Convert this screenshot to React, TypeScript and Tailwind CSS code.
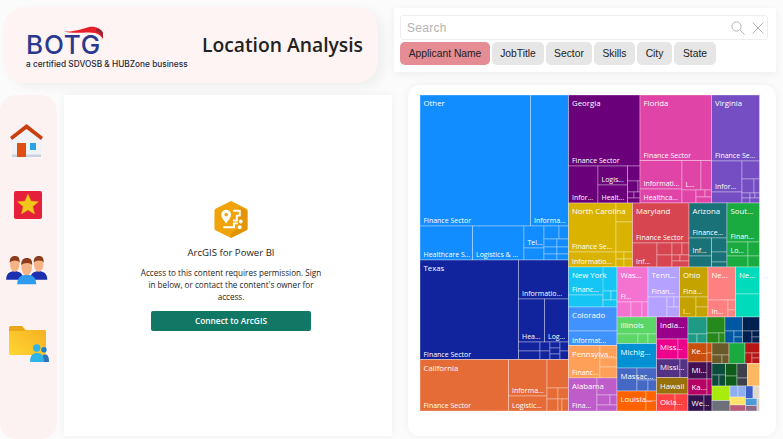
import React from "react";

type Cell = [number, number, number, number, string?];
type Group = { fill: string; name?: string; nx?: number; cells: Cell[] };

const groups: Group[] = [
  { fill: "#118DFF", name: "Other", cells: [[420,95,530.5,226,"Finance Sector"],[530.5,95,568.5,226,"Informa..."],[420,226,472.5,260,"Healthcare S..."],[472.5,226,524,260,"Logistics & ..."],[524,226,544,248,"Tel..."],[524,248,544,260],[544,226,559,239],[559,226,568.5,239],[544,239,557,247],[557,239,568.5,247],[544,247,557,254],[544,254,557,260],[557,247,568.5,254],[557,254,568.5,260]] },
  { fill: "#12239E", name: "Texas", cells: [[420,260,518.5,359.5,"Finance Sector"],[518.5,260,568.5,299,"Informatio..."],[518.5,299,544.5,342,"Hea..."],[544.5,299,568.5,342,"Log..."],[518.5,342,540,351],[518.5,351,540,359.5],[540,342,550,351],[540,351,550,359.5],[550,342,560,348],[550,348,560,354],[550,354,560,359.5],[560,342,568.5,351],[560,351,568.5,359.5]] },
  { fill: "#E66C37", name: "California", cells: [[420,359.5,508.5,411,"Finance Sector"],[508.5,359.5,547,396,"Informa..."],[508.5,396,547,411,"Logistic..."],[547,359.5,568.5,388],[547,388,558,399],[558,388,568.5,399],[547,399,558,411],[558,399,562,411],[562,399,568.5,411]] },
  { fill: "#6B007B", name: "Georgia", cells: [[568.5,95,640,166,"Finance Sector"],[568.5,166,598,203,"Infor..."],[598,166,627.5,185,"Logis..."],[598,185,627.5,203,"Healt..."],[627.5,166,640,181],[627.5,181,638,192],[638,181,640,192],[627.5,192,634,198],[634,192,640,198],[627.5,198,640,203]] },
  { fill: "#E044A7", name: "Florida", cells: [[640,95,711.5,160.5,"Finance Sector"],[640,160.5,682,189,"Informati..."],[640,189,682,203,"Healthca..."],[682,160.5,701,190,"L..."],[701,160.5,711.5,190],[682,190,696,203],[696,190,705,197],[705,190,711.5,197],[696,197,711.5,203]] },
  { fill: "#744EC2", name: "Virginia", cells: [[711.5,95,759.5,161,"Finance Se..."],[711.5,161,742,192,"Infor..."],[711.5,192,742,203],[742,161,759.5,179],[742,179,754,193],[754,179,759.5,193],[742,193,750,198],[750,193,755,198],[755,193,759.5,198],[742,198,750,203],[750,198,759.5,203]] },
  { fill: "#D9B300", name: "North Carolina", cells: [[568.5,203,616,252,"Finance Se..."],[568.5,252,616,267,"Informatio..."],[616,203,632.5,222],[616,222,632.5,252],[616,252,624,259],[624,252,632.5,259],[616,259,624,267],[624,259,632.5,267]] },
  { fill: "#D64550", name: "Maryland", cells: [[632.5,203,689,243,"Finance Sector"],[632.5,243,657,267,"Inf..."],[657,243,672,255],[672,243,682,255],[682,243,689,255],[657,255,672,267],[672,255,680,261],[680,255,689,261],[672,261,689,267]] },
  { fill: "#197278", name: "Arizona", cells: [[689,203,727,238,"Finance..."],[689,238,711.5,256,"Inf..."],[711.5,238,727,252],[711.5,252,727,262],[689,256,711.5,267],[711.5,262,727,267]] },
  { fill: "#1AAB40", name: "Sout...", cells: [[727,203,759.5,242,"Finan..."],[727,242,748,256,"Lo..."],[748,242,759.5,256],[727,256,748,267],[748,256,759.5,267]] },
  { fill: "#15C6F4", name: "New York", cells: [[568.5,267,617,295,"Financ..."],[568.5,295,603,307],[603,267,617,291],[603,291,611,300],[611,291,617,300],[603,300,617,307]] },
  { fill: "#4092FF", name: "Colorado", cells: [[568.5,307,617,331],[568.5,331,617,345.5,"Informat..."]] },
  { fill: "#FFA058", name: "Pennsylva...", cells: [[568.5,345.5,600,378,"Financ..."],[600,345.5,617,358],[600,358,617,367],[600,367,617,378]] },
  { fill: "#BE5DC9", name: "Alabama", cells: [[568.5,378,597,411,"Fina..."],[597,378,617,395],[597,395,610,405],[610,395,617,405],[597,405,617,411]] },
  { fill: "#F472D0", name: "Was...", cells: [[617,267,648,302,"Fl..."],[617,302,631,317],[631,302,642,317],[642,302,648,317]] },
  { fill: "#B5A1FF", name: "Tenn...", cells: [[648,267,679.5,297,"Finan..."],[648,297,667,317],[667,297,674,307],[674,297,679.5,307],[667,307,679.5,317]] },
  { fill: "#C4A200", name: "Ohio", cells: [[679.5,267,708,297,"Fina..."],[679.5,297,696,317,"I..."],[696,297,708,307],[696,307,708,317]] },
  { fill: "#FF8080", name: "Ne...", cells: [[708,267,735.5,300],[708,300,728,317,"In..."],[728,300,735.5,310],[728,310,735.5,317]] },
  { fill: "#00DBBC", name: "Ne...", cells: [[735.5,267,759.5,294],[735.5,294,759.5,317]] },
  { fill: "#5BD667", name: "Illinois", cells: [[617,317,656.5,334],[617,334,638,343.5],[638,334,648,343.5],[648,334,656.5,343.5]] },
  { fill: "#0091D5", name: "Michig...", cells: [[617,343.5,656.5,368]] },
  { fill: "#4668C5", name: "Massac...", cells: [[617,368,637,391],[637,368,656.5,380],[637,380,648,391],[648,380,656.5,391]] },
  { fill: "#FF6300", name: "Louisia...", cells: [[617,391,646,411],[646,391,656.5,401],[646,401,656.5,411]] },
  { fill: "#99008A", name: "India...", cells: [[656.5,317,688,339]] },
  { fill: "#EC008C", name: "Miss...", cells: [[656.5,339,678,359],[678,339,688,359]] },
  { fill: "#533285", name: "Missi...", cells: [[656.5,359,680,377.5],[680,359,688,377.5]] },
  { fill: "#99700A", name: "Hawaii", cells: [[656.5,377.5,688,394]] },
  { fill: "#FF4141", name: "Okla...", cells: [[656.5,394,675,411],[675,394,688,411]] },
  { fill: "#1F9A85", cells: [[688,317,707,334],[688,334,697,343],[697,334,707,343]] },
  { fill: "#25891C", cells: [[707,317,725,333],[707,333,719,343],[719,333,725,343]] },
  { fill: "#0057A2", cells: [[725,317,742.5,331],[725,331,734,343],[734,331,742.5,337],[734,337,742.5,343]] },
  { fill: "#002050", cells: [[742.5,317,759.5,331],[742.5,331,752,343],[752,331,759.5,337],[752,337,759.5,343]] },
  { fill: "#C94F0F", name: "Ke...", cells: [[688,343,707,362],[707,343,712,353],[707,353,712,362]] },
  { fill: "#450F54", name: "Mi...", cells: [[688,362,707,379],[707,362,712,379]] },
  { fill: "#B60064", name: "Ka...", cells: [[688,379,707,395],[707,379,712,395]] },
  { fill: "#34124F", name: "We...", cells: [[688,395,704,411],[704,395,712,411]] },
  { fill: "#6B5A29", cells: [[712,343,729,355],[712,355,722,363.5],[722,355,729,363.5]] },
  { fill: "#1AAB40", cells: [[729,343,745,363.5]] },
  { fill: "#B71616", cells: [[745,343,759.5,353],[745,353,752,363.5],[752,353,759.5,358],[752,358,759.5,363.5]] },
  { fill: "#0C4C3B", cells: [[712,363.5,725.5,375],[712,375,719,386],[719,375,725.5,386]] },
  { fill: "#0F5C1A", cells: [[725.5,363.5,737,376],[725.5,376,737,386]] },
  { fill: "#3D424A", cells: [[737,363.5,747.5,378],[737,378,747.5,386]] },
  { fill: "#FFB762", cells: [[747.5,363.5,759.5,386]] },
  { fill: "#A8EB0C", cells: [[712,386,730,400.5]] },
  { fill: "#6C7078", cells: [[712,400.5,730,411]] },
  { fill: "#8FAEF0", cells: [[730,386,738,397],[738,386,745.5,397]] },
  { fill: "#FFE36B", cells: [[730,397,745.5,405]] },
  { fill: "#B85C7A", cells: [[730,405,745.5,411]] },
  { fill: "#3A5FC8", cells: [[745.5,386,753,398.5]] },
  { fill: "#E0D8CC", cells: [[753,386,759.5,398.5]] },
  { fill: "#4C9AD8", cells: [[745.5,398.5,757,405.5]] },
  { fill: "#8A6A8A", cells: [[745.5,405.5,757,411]] },
  { fill: "#D8C8B8", cells: [[757,398.5,759.5,411]] },
];

function Treemap() {
  return (
    <svg width={340} height={317} viewBox="420 95 340 317" className="block" style={{ fontFamily: "'Open Sans', sans-serif" }}>
      {groups.map((g, i) => (
        <g key={i}>
          {g.cells.map((c, j) => (
            <rect key={j} x={c[0]} y={c[1]} width={c[2] - c[0]} height={c[3] - c[1]} fill={g.fill} stroke="#ffffff" strokeOpacity={0.32} strokeWidth={1} />
          ))}
          {g.cells.map((c, j) =>
            c[4] ? (
              <text key={j} x={c[0] + 3.5} y={c[3] - 3} fill="#fff" fontSize={7} fontWeight={500}>{c[4]}</text>
            ) : null
          )}
          {g.name ? (
            <text x={g.cells[0][0] + 3.5} y={g.cells[0][1] + 11} fill="#fff" fontSize={7.8} fontWeight={500}>{g.name}</text>
          ) : null}
        </g>
      ))}
    </svg>
  );
}

function Logo() {
  return (
    <div className="relative w-[164px] h-[45px] shrink-0" style={{ fontFamily: "Inter, sans-serif" }}>
      <svg className="absolute left-[37px] top-[3px]" width="41" height="14" viewBox="0 0 41 14">
        <path d="M0 5 C8 7 18 3 26 1 C32 0 38 2 40 7 L40 13 C38 10 36 8 32 7 C24 5 12 9 0 5Z" fill="#E8202A" />
        <path d="M33 3 C37 3 39.5 5 40 8 L40 13 C39 9 37 6 33 5Z" fill="#8E2A3A" />
      </svg>
      <div className="absolute left-0 top-[11px] text-[26px] leading-[22px] text-[#2A3990] font-medium tracking-[0.8px]">BOTG</div>
      <div className="absolute left-0 top-[36px] text-[8.3px] leading-[10px] font-medium text-[#2a2a3a] whitespace-nowrap">a certified SDVOSB &amp; HUBZone business</div>
    </div>
  );
}

function HomeIcon() {
  return (
    <svg width="34" height="34" viewBox="0 0 34 34">
      <path d="M2 12 L16.5 2 L31 12 V33 H2Z" fill="#F0F2F5" />
      <rect x="2" y="30.5" width="29" height="2.5" fill="#C8D3DE" />
      <path d="M0 13 L16.5 0 L33 13 L31 16 L16.5 5 L2 16Z" fill="#C9400F" />
      <rect x="7" y="19" width="9" height="14" fill="#E04E13" />
      <rect x="20" y="19" width="6" height="7" fill="#2AA4E8" />
    </svg>
  );
}
function StarIcon() {
  return (
    <svg width="28" height="28" viewBox="0 0 28 28">
      <rect width="28" height="28" rx="2" fill="#E5203A" />
      <path d="M14 3 L17 10 L24.5 10.7 L18.8 15.6 L20.6 23 L14 19 L7.4 23 L9.2 15.6 L3.5 10.7 L11 10Z" fill="#F0C81C" stroke="#E3A014" strokeWidth="0.5" />
    </svg>
  );
}
function Person({ x, y, s, fill }: { x: number; y: number; s: number; fill: string }) {
  return (
    <g transform={`translate(${x} ${y}) scale(${s})`}>
      <path d="M-9 24 C-9 17 -5 15 0 15 C5 15 9 17 9 24Z" fill={fill} />
      <ellipse cx="0" cy="8" rx="5" ry="7.4" fill="#F5B388" />
      <path d="M-5.2 6 C-5.6 0 -2 -1 0 -1 C3 -1 5.6 0 5.2 6 C4 3 -3 3 -5.2 6Z" fill="#8C3B1C" />
    </g>
  );
}
function PeopleIcon() {
  return (
    <svg width="42" height="29" viewBox="0 0 42 29">
      <Person x={8.7} y={1} s={0.95} fill="#1B2FB0" />
      <Person x={32.7} y={1} s={0.95} fill="#1B2FB0" />
      <Person x={20.7} y={3} s={1.05} fill="#2F9BEF" />
    </svg>
  );
}
function FolderIcon() {
  return (
    <svg width="40" height="36" viewBox="0 0 40 36">
      <defs>
        <linearGradient id="folderFill" x1="0" y1="1" x2="1" y2="0">
          <stop offset="0" stopColor="#FFD633" />
          <stop offset="1" stopColor="#F5AE20" />
        </linearGradient>
      </defs>
      <path d="M0 2 Q0 0 2 0 H13 L17 4 H36 Q37 4 37 6 V27 Q37 29 35 29 H2 Q0 29 0 27Z" fill="url(#folderFill)" />
      <path d="M0 2 Q0 0 2 0 H13 L16 5 H0Z" fill="#EBA71A" />
      <circle cx="35" cy="23.7" r="2.7" fill="#1F7FC8" />
      <path d="M32 36 C32 30 33.5 28.5 36 28.5 C38.5 28.5 40 30 40 36Z" fill="#2F74B8" />
      <circle cx="27.7" cy="22" r="3.7" fill="#2FB4EA" />
      <path d="M21 36 C21 29 24 27 28 27 C32 27 35 29 35 36Z" fill="#2FB4EA" />
    </svg>
  );
}
function ArcIcon() {
  return (
    <svg width="36" height="37" viewBox="0 0 36 38">
      <path d="M18 0 L34 8 Q35 9 35 10 V28 Q35 29 34 30 L18 38 L2 30 Q1 29 1 28 V10 Q1 9 2 8Z" fill="#F0A30A" />
      <path d="M18 38 L34 30 Q35 29 35 28 V10 L26 6 V28 L18 33Z" fill="#D98A05" opacity="0.6" />
      <path d="M13 9 a5 5 0 0 1 5 5 c0 3 -3 6 -5 9 c-2 -3 -5 -6 -5 -9 a5 5 0 0 1 5 -5Z" fill="#fff" />
      <circle cx="13" cy="14" r="1.8" fill="#F0A30A" />
      <path d="M20 10 H27 V15 H24 V20 H20 M10 27 H21 V23 H25" fill="none" stroke="#fff" strokeWidth="2" />
      <circle cx="28" cy="21" r="2" fill="#fff" />
      <circle cx="27" cy="27" r="2" fill="#fff" />
    </svg>
  );
}

const tabs = [
  { t: "JobTitle", c: "w-[52px]" },
  { t: "Sector", c: "w-[46px]" },
  { t: "Skills", c: "w-[41px]" },
  { t: "City", c: "w-[35px]" },
  { t: "State", c: "w-[42px]" },
];

export default function App() {
  return (
    <div className="w-[783px] h-[439px] overflow-hidden bg-[#fbfbfb] flex flex-col" style={{ fontFamily: "'Open Sans', sans-serif" }}>
      <div className="flex items-start pt-[7px] pl-[3px] h-[95px] shrink-0">
        <div className="w-[375px] h-[76px] rounded-[22px] bg-[#fdf4f3] flex items-center justify-between pl-[23px] pr-[15px] shadow-[6px_4px_12px_rgba(0,0,0,0.05)]">
          <Logo />
          <div className="text-[19.3px] leading-[24px] font-semibold text-[#222] whitespace-nowrap">Location Analysis</div>
        </div>
        <div className="ml-[16px] mt-[1px] w-[382px] h-[64px] bg-white shadow-[0_2px_8px_rgba(0,0,0,0.06)] px-[6px] pt-[7px] flex flex-col gap-[2px]" style={{ fontFamily: "'Liberation Sans', sans-serif" }}>
          <div className="h-[25px] w-[368px] border border-[#eeeeee] rounded-[3px] flex items-center pl-[6px] pr-[3px] bg-white">
            <span className="text-[12px] text-[#b4b4b4] tracking-[0.3px] grow">Search</span>
            <svg width="14" height="14" viewBox="0 0 14 14" fill="none" stroke="#b3b3b3" strokeWidth="1">
              <circle cx="5.5" cy="5.5" r="4.6" />
              <path d="M9 9 L13.5 13.5" />
            </svg>
            <svg className="ml-[7px]" width="12" height="12" viewBox="0 0 12 12" fill="none" stroke="#b3b3b3" strokeWidth="1">
              <path d="M0.5 0.5 L11.5 11.5 M11.5 0.5 L0.5 11.5" />
            </svg>
          </div>
          <div className="flex gap-[2px] text-[10.3px] text-[#222]">
            <div className="h-[23px] w-[90px] rounded-[5px] bg-[#E68C94] flex items-center justify-center">Applicant Name</div>
            {tabs.map((x) => (
              <div key={x.t} className={`h-[23px] ${x.c} rounded-[5px] bg-[#e6e6e6] flex items-center justify-center`}>{x.t}</div>
            ))}
          </div>
        </div>
      </div>
      <div className="flex grow min-h-0">
        <div className="w-[57px] rounded-[16px] bg-[#fdf2f2] flex flex-col items-center pt-[6px] shrink-0">
          <div className="mt-[23px] ml-[-3px]"><HomeIcon /></div>
          <div className="mt-[33px] ml-[-2px]"><StarIcon /></div>
          <div className="mt-[37px] ml-[-3px]"><PeopleIcon /></div>
          <div className="mt-[41px]"><FolderIcon /></div>
        </div>
        <div className="ml-[7px] w-[328px] h-[341px] bg-white shadow-[0_0_8px_rgba(0,0,0,0.05)] flex flex-col items-center pt-[106px] pl-[6px] text-[#252423]">
          <ArcIcon />
          <div className="mt-[8px] text-[9.6px] leading-[14px] font-normal">ArcGIS for Power BI</div>
          <div className="mt-[7px] w-[186px] text-center text-[8.15px] leading-[12px]">Access to this content requires permission. Sign in below, or contact the content's owner for access.</div>
          <div className="mt-[8px] w-[160px] h-[20px] bg-[#117865] rounded-[2px] text-white text-[8.3px] flex items-center justify-center font-semibold">Connect to ArcGIS</div>
        </div>
        <div className="ml-[16px] mt-[-10px] w-[368px] h-[351px] bg-white rounded-[12px] shadow-[0_0_8px_rgba(0,0,0,0.05)] pl-[12px] pt-[10px]">
          <Treemap />
        </div>
      </div>
    </div>
  );
}
